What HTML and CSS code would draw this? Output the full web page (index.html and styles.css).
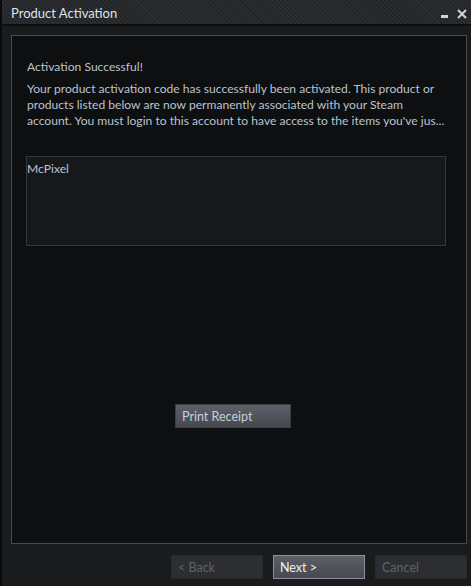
FILE: index.html
```html
<!DOCTYPE html>
<html>
<head>
<meta charset="utf-8">
<link rel="stylesheet" href="styles.css">
</head>
<body>
<div class="window">
  <div class="titlebar">
    <span class="title">Product Activation</span>
    <div class="controls">
      <svg class="ctl" width="10" height="10" viewBox="0 0 10 10"><rect x="1" y="6" width="7" height="3" fill="#d0d3d6"/></svg>
      <svg class="ctl" width="10" height="10" viewBox="0 0 10 10"><path d="M1 1 L9 9 M9 1 L1 9" stroke="#d0d3d6" stroke-width="2"/></svg>
    </div>
  </div>
  <div class="content">
    <div class="panel">
      <p class="heading">Activation Successful!</p>
      <p class="desc">
        <span class="line">Your product activation code has successfully been activated. This product or</span>
        <span class="line">products listed below are now permanently associated with your Steam</span>
        <span class="line">account. You must login to this account to have access to the items you've jus...</span>
      </p>
      <div class="listbox">McPixel</div>
      <div class="print-row"><button class="btn print">Print Receipt</button></div>
    </div>
    <div class="footer">
      <button class="btn disabled">&lt; Back</button>
      <button class="btn primary">Next &gt;</button>
      <button class="btn disabled">Cancel</button>
    </div>
  </div>
</div>
</body>
</html>
```

FILE: styles.css
```css
html, body {
  margin: 0;
  padding: 0;
  background: #1a1b1d;
}
body {
  font-family: "Lato", "Open Sans", sans-serif;
  font-size: 12.1px;
  color: #b9c4cf;
}
.window {
  width: 471px;
  height: 586px;
  display: flex;
  flex-direction: column;
  border-left: 2px solid #090a0b;
  box-sizing: border-box;
  background: #1a1b1d;
}
.titlebar {
  height: 24px;
  display: flex;
  align-items: center;
  justify-content: space-between;
  padding: 0 4px 0 9px;
  border-bottom: 2px solid #0d0e0f;
  background: repeating-linear-gradient(45deg, #2c2e31 0px, #2c2e31 1.5px, #222427 1.5px, #222427 3px);
  flex-shrink: 0;
}
.title {
  color: #dde3ea;
  font-size: 13px;
  padding-top: 2px;
}
.controls {
  display: flex;
  gap: 7px;
  align-items: center;
  padding-top: 4px;
}
.ctl { display: block; }
.content {
  flex: 1;
  display: flex;
  flex-direction: column;
  padding: 9px 4px 8px 9px;
}
.panel {
  height: 509px;
  box-sizing: border-box;
  border: 1px solid #47494c;
  background: #0e0f11;
  padding: 23px 20px 0 15px;
  display: flex;
  flex-direction: column;
}
.heading {
  margin: 0;
  line-height: 16px;
  height: 16px;
}
.desc {
  margin: 6px 0 0 0;
  line-height: 16px;
}
.line {
  display: block;
  white-space: nowrap;
}
.listbox {
  margin: 27px 0 0 -1px;
  width: 420px;
  height: 90px;
  box-sizing: border-box;
  border: 1px solid #35383c;
  background: #17181b;
  padding: 4px 0 0 0;
  line-height: 16px;
}
.print-row {
  margin-top: 158px;
  padding-left: 148px;
}
.btn {
  font-family: inherit;
  font-size: 12.5px;
  height: 24px;
  box-sizing: border-box;
  text-align: left;
  padding: 2px 0 0 6px;
  margin: 0;
  line-height: 20px;
}
.print {
  width: 116px;
  border: 1px solid #3b3d41;
  background: linear-gradient(#5d6168, #45484e);
  color: #c3d0dc;
}
.footer {
  display: flex;
  justify-content: flex-end;
  gap: 10px;
  margin-top: 11px;
}
.footer .btn {
  width: 92px;
}
.disabled {
  border: 1px solid #25272a;
  background: #2c2e32;
  color: #5f646b;
}
.primary {
  border: 1px solid #8d9095;
  background: linear-gradient(#5b5f66, #474a50);
  color: #eef2f5;
}
```
